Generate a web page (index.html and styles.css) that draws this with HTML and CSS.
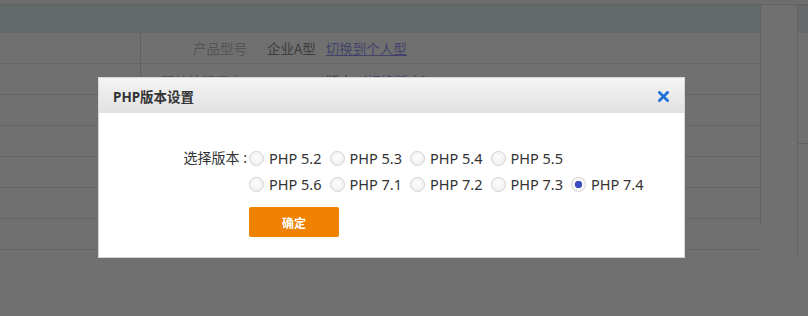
FILE: index.html
```html
<!DOCTYPE html>
<html lang="zh-CN">
<head>
  <meta charset="UTF-8">
  <meta name="viewport" content="width=device-width, initial-scale=1.0">
  <title>PHP版本设置</title>
  <link rel="stylesheet" href="styles.css">
</head>
<body>
  <div class="topbar"></div>
  <div class="page">
    <div class="content">
      <div class="content-head"></div>
      <div class="row">
        <div class="cell-side"></div>
        <div class="cell-main">
          <span class="label">产品型号</span>
          <span class="value">企业A型</span>
          <a href="#" class="link">切换到个人型</a>
        </div>
      </div>
      <div class="row">
        <div class="cell-side"></div>
        <div class="cell-main">
          <span class="label">网站编程语言</span>
          <span class="value">PHP</span>
          <span class="value">PHP版本</span>
          <a href="#" class="link">[切换版本]</a>
        </div>
      </div>
      <div class="row"><div class="cell-side"></div><div class="cell-main"></div></div>
      <div class="row"><div class="cell-side"></div><div class="cell-main"></div></div>
      <div class="row"><div class="cell-side"></div><div class="cell-main"></div></div>
      <div class="row"><div class="cell-side"></div><div class="cell-main"></div></div>
      <div class="row"><div class="cell-side"></div><div class="cell-main"></div></div>
    </div>
    <div class="spacer"></div>
    <div class="side-panel">
      <div class="side-head"></div>
      <div class="side-body"></div>
    </div>
  </div>

  <div class="mask"></div>

  <div class="dialog">
    <div class="dialog-head">
      <span class="dialog-title">PHP版本设置</span>
      <a href="#" class="dialog-close" title="关闭">
        <svg width="11" height="11" viewBox="0 0 11 11">
          <path d="M1.5 1.5 L9.5 9.5 M9.5 1.5 L1.5 9.5" stroke="#1f72d6" stroke-width="2.8" stroke-linecap="square"/>
        </svg>
      </a>
    </div>
    <div class="dialog-body">
      <div class="field">
        <span class="field-label">选择版本 :</span>
        <div class="options">
          <div class="option-row">
            <label class="option"><input type="radio" name="php" value="5.2"><span>PHP 5.2</span></label>
            <label class="option"><input type="radio" name="php" value="5.3"><span>PHP 5.3</span></label>
            <label class="option"><input type="radio" name="php" value="5.4"><span>PHP 5.4</span></label>
            <label class="option"><input type="radio" name="php" value="5.5"><span>PHP 5.5</span></label>
          </div>
          <div class="option-row">
            <label class="option"><input type="radio" name="php" value="5.6"><span>PHP 5.6</span></label>
            <label class="option"><input type="radio" name="php" value="7.1"><span>PHP 7.1</span></label>
            <label class="option"><input type="radio" name="php" value="7.2"><span>PHP 7.2</span></label>
            <label class="option"><input type="radio" name="php" value="7.3"><span>PHP 7.3</span></label>
            <label class="option"><input type="radio" name="php" value="7.4" checked><span>PHP 7.4</span></label>
          </div>
          <button class="btn-ok">确定</button>
        </div>
      </div>
    </div>
  </div>
</body>
</html>
```

FILE: styles.css
```css
html, body {
  margin: 0;
  padding: 0;
}
body {
  width: 808px;
  height: 316px;
  overflow: hidden;
  background: #ffffff;
  font-family: "Noto Sans", "Noto Sans CJK SC", sans-serif;
  color: #333;
}
.topbar {
  height: 4px;
  background: #f8f8f8;
  border-bottom: 1px solid #e2e2e2;
}
.page {
  display: flex;
  height: 311px;
}
.content {
  width: 760px;
  height: 220px;
  border-right: 1px solid #e2e2e2;
}
.content-head {
  height: 28px;
  background: #e1f1f3;
}
.row {
  display: flex;
  height: 30px;
  border-bottom: 1px solid #e6e6e6;
}
.cell-side {
  width: 140px;
  border-right: 1px solid #dedede;
}
.cell-main {
  display: flex;
  align-items: center;
  gap: 10px;
  padding-left: 52px;
  font-size: 13.5px;
  font-family: "Noto Sans CJK SC", sans-serif;
}
.row + .row .cell-main {
  padding-left: 20px;
  padding-top: 4px;
}
.label {
  color: #c0c0c0;
  margin-right: 10px;
}
.value {
  color: #8c8c8c;
}
.link {
  color: #9a9af0;
  text-decoration: underline;
}
.spacer {
  width: 36px;
}
.side-panel {
  flex: 1;
  border-left: 1px solid #dcdcdc;
  border-top: 1px solid #dcdcdc;
  height: 250px;
}
.side-head {
  height: 27px;
  background: #e6f0f1;
}
.side-body {
  height: 110px;
  border-bottom: 1px solid #e0e0e0;
}

.mask {
  position: fixed;
  inset: 0;
  background: rgba(0, 0, 0, 0.56);
}

.dialog {
  position: absolute;
  left: 98px;
  top: 77px;
  width: 587px;
  height: 181px;
  box-sizing: border-box;
  background: #fff;
  border: 1px solid #d6d6d6;
}
.dialog-head {
  height: 35px;
  display: flex;
  align-items: center;
  justify-content: space-between;
  padding: 0 15px 0 14px;
  background: linear-gradient(#f4f4f4, #e1e1e1);
}
.dialog-title {
  font-size: 13.5px;
  font-weight: bold;
  color: #333;
}
.dialog-close {
  display: flex;
  margin-top: 2px;
}
.dialog-body {
  padding: 32px 0 0 78px;
}
.field {
  display: flex;
  font-size: 14.5px;
}
.field-label {
  width: 70px;
  text-align: right;
  line-height: 26px;
  margin-right: 2px;
  font-size: 14px;
  color: #333;
}
.option-row {
  display: flex;
  height: 26px;
  align-items: center;
}
.option {
  display: flex;
  align-items: center;
  width: 80.5px;
  color: #333;
}
.option input {
  appearance: none;
  -webkit-appearance: none;
  margin: 0 5px 0 0;
  width: 15px;
  height: 15px;
  border-radius: 50%;
  border: 1px solid #d2d2d2;
  background: radial-gradient(circle at 50% 40%, #fdfdfd, #ececec);
  box-sizing: border-box;
}
.option input:checked {
  background: radial-gradient(circle, #3b4cc0 0, #3b4cc0 3.4px, #f6f6f6 4px);
}
.btn-ok {
  margin-top: 10px;
  width: 90px;
  height: 30px;
  border: none;
  border-radius: 2px;
  background: #ef8200;
  color: #fff;
  font-size: 12px;
  font-family: "Noto Sans CJK SC", sans-serif;
  font-weight: bold;
  cursor: pointer;
}
```
